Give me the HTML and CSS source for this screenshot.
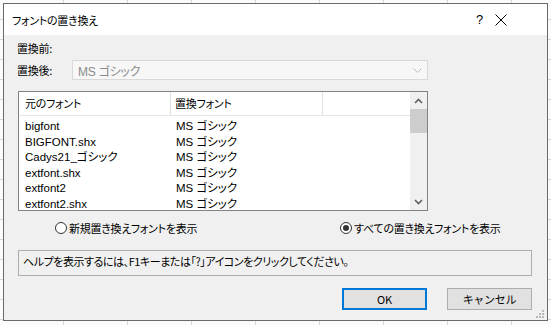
FILE: index.html
```html
<!DOCTYPE html>
<html lang="ja">
<head>
<meta charset="utf-8">
<title>フォントの置き換え</title>
<link rel="stylesheet" href="styles.css">
</head>
<body>
<div class="desk">
  <div class="dialog">
    <div class="titlebar">
      <span class="title">フォントの置き換え</span>
      <span class="qmark">?</span>
      <span class="close">
        <svg width="12" height="12" viewBox="0 0 12 12"><path d="M0.5 0.5 L11.5 11.5 M11.5 0.5 L0.5 11.5" stroke="#000" stroke-width="1" fill="none"/></svg>
      </span>
    </div>
    <div class="body">
      <div class="lbl before">置換前:</div>
      <div class="after-row">
        <span class="lbl">置換後:</span>
        <div class="combo">
          <span class="combo-text">MS ゴシック</span>
          <svg class="chev" width="9" height="5" viewBox="0 0 9 5"><path d="M0.5 0.5 L4.5 4.5 L8.5 0.5" stroke="#bcbcbc" stroke-width="1" fill="none"/></svg>
        </div>
      </div>
      <div class="list">
        <div class="list-main">
          <div class="hdr">
            <div class="hc c1">元のフォント</div>
            <div class="hc c2">置換フォント</div>
            <div class="hc c3"></div>
          </div>
          <div class="rows">
            <div class="r"><span class="c1">bigfont</span><span class="c2">MS ゴシック</span></div>
            <div class="r"><span class="c1">BIGFONT.shx</span><span class="c2">MS ゴシック</span></div>
            <div class="r"><span class="c1">Cadys21_ゴシック</span><span class="c2">MS ゴシック</span></div>
            <div class="r"><span class="c1">extfont.shx</span><span class="c2">MS ゴシック</span></div>
            <div class="r"><span class="c1">extfont2</span><span class="c2">MS ゴシック</span></div>
            <div class="r"><span class="c1">extfont2.shx</span><span class="c2">MS ゴシック</span></div>
          </div>
        </div>
        <div class="vscroll">
          <div class="arrow">
            <svg width="9" height="6" viewBox="0 0 9 6"><path d="M1 5 L4.5 1.5 L8 5" stroke="#606060" stroke-width="1.6" fill="none"/></svg>
          </div>
          <div class="track"><div class="thumb"></div></div>
          <div class="arrow">
            <svg width="9" height="6" viewBox="0 0 9 6"><path d="M1 1 L4.5 4.5 L8 1" stroke="#606060" stroke-width="1.6" fill="none"/></svg>
          </div>
        </div>
      </div>
      <div class="radios">
        <label class="radio r1"><span class="circle"></span><span>新規置き換えフォントを表示</span></label>
        <label class="radio r2"><span class="circle on"></span><span>すべての置き換えフォントを表示</span></label>
      </div>
      <div class="helpbox">ヘルプを表示するには、F1キーまたは「?」アイコンをクリックしてください。</div>
      <div class="buttons">
        <button class="btn ok">OK</button>
        <button class="btn">キャンセル</button>
      </div>
    </div>
    <svg class="grip" width="10" height="10" viewBox="0 0 10 10">
      <rect x="8" y="2" width="2" height="2" fill="#b8b8b8"/>
      <rect x="5" y="5" width="2" height="2" fill="#b8b8b8"/>
      <rect x="8" y="5" width="2" height="2" fill="#b8b8b8"/>
      <rect x="2" y="8" width="2" height="2" fill="#b8b8b8"/>
      <rect x="5" y="8" width="2" height="2" fill="#b8b8b8"/>
      <rect x="8" y="8" width="2" height="2" fill="#b8b8b8"/>
    </svg>
  </div>
</div>
</body>
</html>
```
FILE: styles.css
```css
* { box-sizing: border-box; }
html, body { margin: 0; padding: 0; }
body {
  width: 551px;
  height: 325px;
  overflow: hidden;
  font-family: "Noto Sans CJK JP", sans-serif;
  font-size: 11px;
  letter-spacing: -0.25px;
  color: #000;
  background-color: #fbfbfb;
  background-image:
    repeating-linear-gradient(to right, transparent 0, transparent 63px, #d8d8d8 63px, #d8d8d8 64px),
    repeating-linear-gradient(to bottom, transparent 0, transparent 19px, #d8d8d8 19px, #d8d8d8 20px);
}
.desk { padding: 3px 0 0 3px; }
.dialog {
  position: relative;
  width: 545px;
  height: 318px;
  border: 1px solid #6a6a6a;
  background: #f0f0f0;
  display: flex;
  flex-direction: column;
  font-feature-settings: "palt";
}
.titlebar {
  height: 31px;
  background: #fff;
  display: flex;
  align-items: center;
  padding-left: 8px;
  flex-shrink: 0;
}
.title { flex: 1; }
.qmark { font-size: 13px; width: 14px; margin-right: 5px; font-family: "Liberation Sans", sans-serif; }
.close { width: 12px; height: 12px; margin-right: 40px; display: flex; }
.body {
  padding: 6px 0 0 13px;
  display: flex;
  flex-direction: column;
}
.lbl { line-height: 14px; }
.before { height: 14px; }
.after-row {
  display: flex;
  align-items: center;
  margin-top: 5px;
  height: 20px;
}
.after-row .lbl { width: 55px; }
.combo {
  width: 356px;
  height: 20px;
  border: 1px solid #d9d9d9;
  background: #f7f7f7;
  display: flex;
  align-items: center;
  padding-left: 5px;
  color: #8a8a8a;
}
.combo-text { flex: 1; font-family: "Liberation Sans", "Noto Sans CJK JP", sans-serif; font-size: 12px; }
.chev { margin-right: 5px; }
.list {
  margin-top: 11px;
  margin-left: 1px;
  width: 410px;
  height: 120px;
  border: 1px solid #828282;
  background: #fff;
  display: flex;
  overflow: hidden;
}
.list-main { flex: 1; display: flex; flex-direction: column; }
.hdr {
  height: 24px;
  display: flex;
  border-bottom: 1px solid #e5e5e5;
  flex-shrink: 0;
}
.hc { line-height: 23px; padding-left: 6px; }
.hdr .c1 { width: 152px; border-right: 1px solid #e0e0e0; }
.hdr .c2 { width: 152px; border-right: 1px solid #e0e0e0; padding-left: 4px; }
.hdr .c3 { flex: 1; }
.rows { padding-top: 3px; }
.r {
  display: flex;
  height: 15.6px;
  line-height: 15.6px;
  font-family: "Liberation Sans", "Noto Sans CJK JP", sans-serif;
  font-size: 11.5px;
  letter-spacing: 0;
}
.r .c1 { width: 153px; padding-left: 6px; }
.r .c2 { padding-left: 4px; }
.vscroll {
  width: 17px;
  background: #f0f0f0;
  display: flex;
  flex-direction: column;
}
.arrow { height: 17px; display: flex; align-items: center; justify-content: center; }
.track { flex: 1; }
.thumb { height: 24px; background: #cdcdcd; }
.radios {
  display: flex;
  height: 14px;
  margin-top: 10px;
  align-items: center;
}
.radio { display: flex; align-items: center; gap: 2px; line-height: 14px; }
.r1 { margin-left: 38px; width: 285px; }
.circle {
  width: 12px; height: 12px;
  border: 1px solid #333;
  border-radius: 50%;
  background: #fff;
  display: flex; align-items: center; justify-content: center;
}
.circle.on::after {
  content: "";
  width: 6px; height: 6px; border-radius: 50%; background: #333;
}
.helpbox {
  margin-top: 15px;
  margin-left: 1px;
  width: 514px;
  height: 26px;
  border: 1px solid #adadad;
  line-height: 20px;
  padding-left: 4px;
  letter-spacing: -0.45px;
}
.buttons {
  display: flex;
  margin-top: 12px;
  padding-left: 325px;
  gap: 20px;
}
.btn {
  width: 85px;
  height: 22px;
  background: #e1e1e1;
  border: 1px solid #adadad;
  font-family: "Noto Sans CJK JP", sans-serif;
  font-size: 11px;
  letter-spacing: -0.25px;
  padding: 0;
  line-height: 18px;
}
.btn.ok { border: 2px solid #0078d7; }
.grip { position: absolute; right: 3px; bottom: 2px; }
```
